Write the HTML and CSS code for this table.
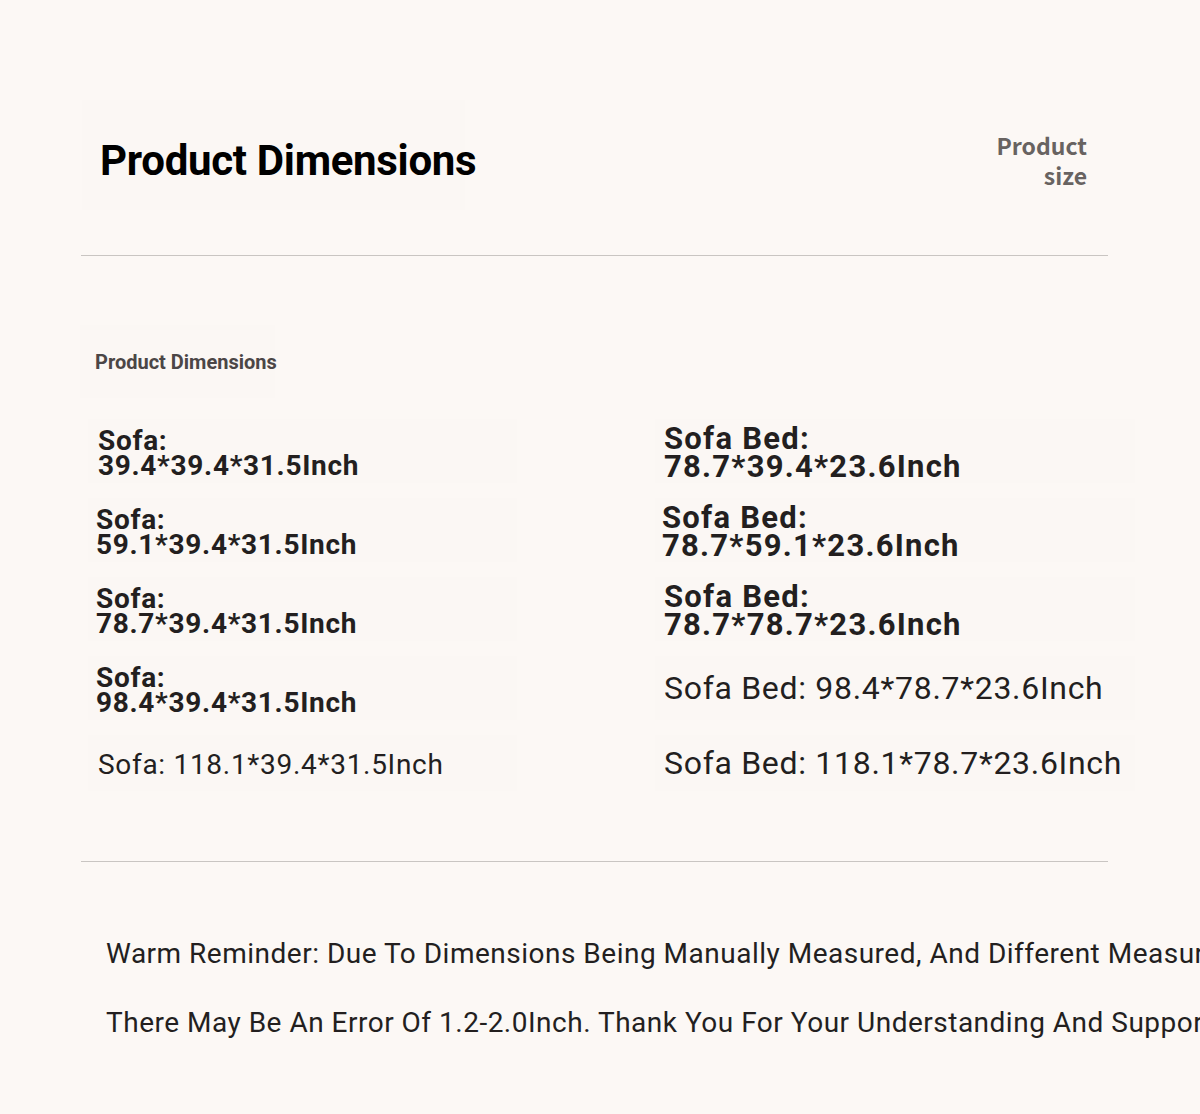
FILE: index.html
```html
<!DOCTYPE html>
<html lang="en">
<head>
<meta charset="utf-8">
<title>Product Dimensions</title>
<link rel="stylesheet" href="styles.css">
</head>
<body>
<div class="page">
  <header class="header">
    <div class="title-box"><h1 class="title">Product Dimensions</h1></div>
    <div class="size-label">Product<br>size</div>
  </header>
  <div class="divider"></div>
  <div class="sub-box"><h2 class="subtitle">Product Dimensions</h2></div>
  <div class="grid">
    <div class="cell cell-left"><p class="dim bold-s">Sofa:<br>39.4*39.4*31.5Inch</p></div>
    <div class="cell cell-right"><p class="dim bold-l">Sofa Bed:<br>78.7*39.4*23.6Inch</p></div>
    <div class="cell cell-left"><p class="dim bold-s shift">Sofa:<br>59.1*39.4*31.5Inch</p></div>
    <div class="cell cell-right"><p class="dim bold-l shift">Sofa Bed:<br>78.7*59.1*23.6Inch</p></div>
    <div class="cell cell-left"><p class="dim bold-s shift">Sofa:<br>78.7*39.4*31.5Inch</p></div>
    <div class="cell cell-right"><p class="dim bold-l">Sofa Bed:<br>78.7*78.7*23.6Inch</p></div>
    <div class="cell cell-left"><p class="dim bold-s shift">Sofa:<br>98.4*39.4*31.5Inch</p></div>
    <div class="cell cell-right"><p class="dim reg-l">Sofa Bed: 98.4*78.7*23.6Inch</p></div>
    <div class="cell cell-left"><p class="dim reg-s">Sofa: 118.1*39.4*31.5Inch</p></div>
    <div class="cell cell-right"><p class="dim reg-l">Sofa Bed: 118.1*78.7*23.6Inch</p></div>
  </div>
  <div class="divider divider-2"></div>
  <div class="notes">
    <p class="note">Warm Reminder: Due To Dimensions Being Manually Measured, And Different Measurement Methods Are Used,</p>
    <p class="note">There May Be An Error Of 1.2-2.0Inch. Thank You For Your Understanding And Support.</p>
  </div>
</div>
</body>
</html>
```
FILE: styles.css
```css
html, body {
  margin: 0;
  padding: 0;
  background: #fcf8f5;
  overflow: hidden;
}

body {
  width: 1200px;
  height: 1114px;
  font-family: Roboto, "Liberation Sans", sans-serif;
  color: #231f1f;
}

.page {
  width: 1027px;
  margin-left: 81px;
  padding-top: 100px;
}

.header {
  display: flex;
  justify-content: space-between;
  align-items: center;
  height: 110px;
}

.title-box {
  width: 365px;
  height: 110px;
  margin-left: 1px;
  padding-left: 18px;
  background: #fbf7f4;
  display: flex;
  align-items: center;
}

.title {
  margin: 12px 0 0;
  white-space: nowrap;
  font-size: 42px;
  font-weight: 700;
  color: #000;
  letter-spacing: -0.3px;
  line-height: 1;
}

.size-label {
  margin-right: 21px;
  margin-top: 10px;
  text-align: right;
  font-family: "Noto Sans CJK SC", "Noto Sans", sans-serif;
  font-weight: 700;
  font-size: 23px;
  line-height: 30px;
  color: #686361;
}

.divider {
  height: 1px;
  background: #c9c5c2;
  margin-top: 45px;
}

.sub-box {
  margin-top: 69px;
  margin-left: -1px;
  width: 180px;
  height: 73px;
  padding-left: 15px;
  background: #fbf7f4;
  display: flex;
  align-items: center;
}

.subtitle {
  margin: 0;
  white-space: nowrap;
  font-size: 20px;
  font-weight: 700;
  color: #4b4646;
  letter-spacing: 0;
}

.grid {
  display: grid;
  grid-template-columns: 429px 480px;
  grid-template-rows: repeat(4, 64px) 56px;
  column-gap: 138px;
  row-gap: 15px;
  margin-top: 21px;
  margin-left: 7px;
}

.cell {
  background: #fbf7f4;
  display: flex;
  align-items: center;
}

.cell-left {
  padding-left: 10px;
}

.cell-right {
  padding-left: 9px;
}

.dim {
  margin: 0;
  white-space: nowrap;
  color: #231f1f;
}

.shift {
  margin-left: -2px;
}

.bold-s {
  padding-top: 4px;
  font-size: 28px;
  font-weight: 700;
  line-height: 25px;
  letter-spacing: 0.7px;
}

.bold-l {
  padding-top: 4px;
  font-size: 31px;
  font-weight: 700;
  line-height: 28px;
  letter-spacing: 1.25px;
}

.reg-l {
  font-size: 32px;
  font-weight: 400;
  line-height: 40px;
  letter-spacing: 0.7px;
}

.reg-s {
  padding-top: 4px;
  font-size: 28px;
  font-weight: 400;
  line-height: 36px;
  letter-spacing: 0.7px;
}

.divider-2 {
  margin-top: 70px;
}

.notes {
  margin-top: 66px;
  margin-left: 11px;
  display: flex;
  flex-direction: column;
  gap: 19px;
}

.note {
  margin: 0;
  height: 50px;
  padding-left: 14px;
  display: flex;
  align-items: center;
  white-space: nowrap;
  font-size: 28px;
  font-weight: 400;
  letter-spacing: 0.5px;
  color: #231f1f;
}
```
